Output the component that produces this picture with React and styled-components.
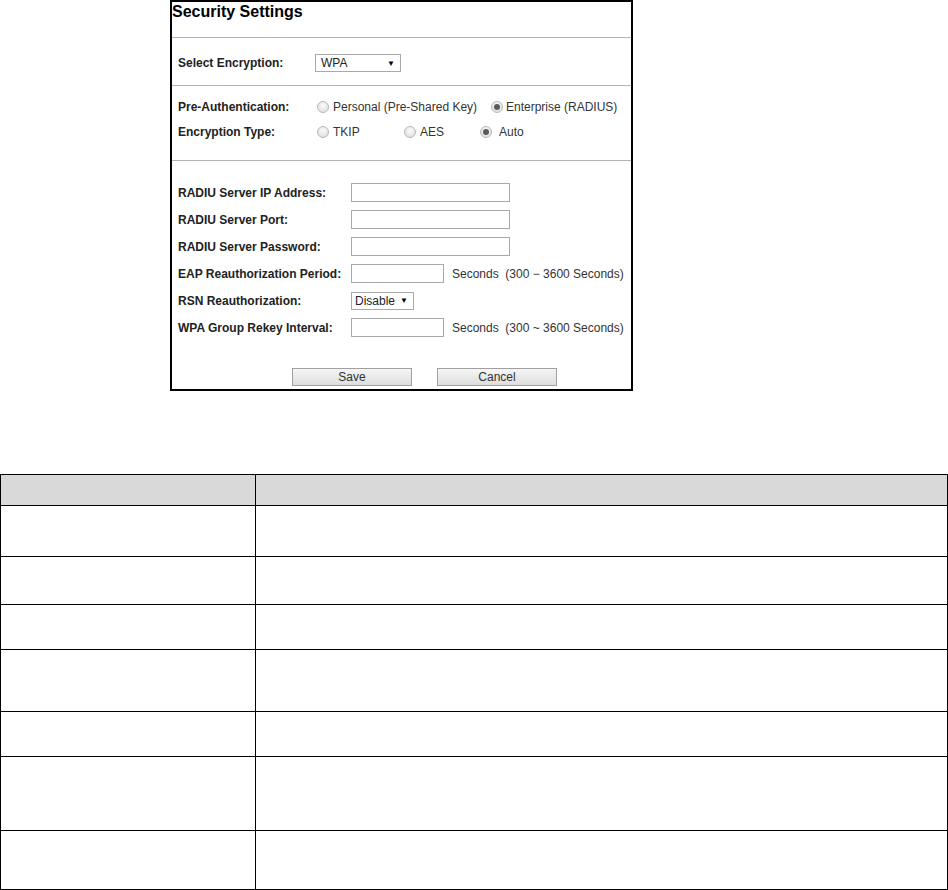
import React from "react";
import styled, { createGlobalStyle } from "styled-components";

const GlobalStyle = createGlobalStyle`
  body {
    margin: 0;
    background: #fff;
    font-family: "Liberation Sans", Arial, sans-serif;
  }
`;

const Page = styled.div`
  width: 948px;
`;

const Panel = styled.div`
  box-sizing: border-box;
  margin-left: 170px;
  width: 463px;
  height: 391px;
  border: 2px solid #000;
  display: flex;
  flex-direction: column;
`;

const Title = styled.h1`
  margin: 0;
  height: 35px;
  font-size: 16px;
  line-height: 20px;
  font-weight: bold;
  color: #000;
`;

const Divider = styled.div`
  height: 1px;
  background: #b4b4b4;
`;

const Section = styled.div`
  display: flex;
  flex-direction: column;
  gap: ${(p) => p.gap || 0}px;
  padding: ${(p) => p.pad};
`;

const Row = styled.div`
  display: flex;
  align-items: center;
  height: ${(p) => p.h || 18}px;
  padding-left: 6px;
`;

const Label = styled.div`
  width: ${(p) => p.w}px;
  flex: none;
  font-size: 12px;
  font-weight: bold;
  color: #222;
`;

const SelectBox = styled.div`
  box-sizing: border-box;
  width: ${(p) => p.w}px;
  height: 18px;
  border: 1px solid #a9a9a9;
  background: #fff;
  display: flex;
  align-items: center;
  justify-content: space-between;
  padding: 0 5px 0 ${(p) => p.pl || 5}px;
  font-size: 12px;
  color: #222;
`;

const Arrow = styled.span`
  font-size: 8px;
  color: #000;
`;

const RadioOption = styled.label`
  display: flex;
  align-items: center;
  gap: ${(p) => p.gap || 4}px;
  width: ${(p) => (p.w ? `${p.w}px` : "auto")};
  font-size: 12px;
  color: #333;
`;

const RadioDot = styled.span`
  box-sizing: border-box;
  width: 12px;
  height: 12px;
  border-radius: 50%;
  border: 1px solid #b8b8b8;
  background: radial-gradient(circle at 50% 35%, #fafafa 0%, #e4e4e4 70%, #d4d4d4 100%);
  display: flex;
  align-items: center;
  justify-content: center;
  flex: none;
  &::after {
    content: "";
    width: 6px;
    height: 6px;
    border-radius: 50%;
    background: ${(p) => (p.checked ? "#5a5a5a" : "transparent")};
  }
`;

const TextInput = styled.div`
  box-sizing: border-box;
  width: ${(p) => p.w}px;
  height: 19px;
  border: 1px solid #a9a9a9;
  background: #fff;
  flex: none;
`;

const Hint = styled.span`
  margin-left: 8px;
  font-size: 12px;
  color: #333;
  white-space: pre;
`;

const Buttons = styled.div`
  display: flex;
  gap: 25px;
  margin-top: 31px;
  padding-left: 120px;
`;

const Button = styled.div`
  box-sizing: border-box;
  width: 120px;
  height: 18px;
  border: 1px solid #a0a0a0;
  background: linear-gradient(#f6f6f6, #dedede);
  display: flex;
  align-items: center;
  justify-content: center;
  font-size: 12px;
  color: #333;
`;

const Table = styled.table`
  margin-top: 83px;
  width: 948px;
  border-collapse: collapse;
  table-layout: fixed;
`;

const Tr = styled.tr`
  height: ${(p) => p.h}px;
  background: ${(p) => (p.head ? "#d9d9d9" : "#fff")};
`;

const Td = styled.td`
  border: 1px solid #000;
  padding: 0;
  width: ${(p) => (p.w ? `${p.w}px` : "auto")};
`;

const fields = [
  { label: "RADIU Server IP Address:", w: 159 },
  { label: "RADIU Server Port:", w: 159 },
  { label: "RADIU Server Password:", w: 159 },
  { label: "EAP Reauthorization Period:", w: 93, hint: "Seconds  (300 \u2212 3600 Seconds)" },
  { label: "RSN Reauthorization:", select: "Disable" },
  { label: "WPA Group Rekey Interval:", w: 93, hint: "Seconds  (300 ~ 3600 Seconds)" },
];

const rowHeights = [51, 48, 45, 62, 45, 74, 59];

export default function App() {
  return (
    <Page>
      <GlobalStyle />
      <Panel>
        <Title>Security Settings</Title>
        <Divider />
        <Section pad="16px 0 13px">
          <Row>
            <Label w={137}>Select Encryption:</Label>
            <SelectBox w={86}>
              WPA <Arrow>▼</Arrow>
            </SelectBox>
          </Row>
        </Section>
        <Divider />
        <Section pad="12px 0 19px" gap={7}>
          <Row>
            <Label w={139}>Pre-Authentication:</Label>
            <RadioOption w={174}>
              <RadioDot />
              Personal (Pre-Shared Key)
            </RadioOption>
            <RadioOption gap={3}>
              <RadioDot checked />
              Enterprise (RADIUS)
            </RadioOption>
          </Row>
          <Row>
            <Label w={139}>Encryption Type:</Label>
            <RadioOption w={87}>
              <RadioDot />
              TKIP
            </RadioOption>
            <RadioOption w={76}>
              <RadioDot />
              AES
            </RadioOption>
            <RadioOption gap={7}>
              <RadioDot checked />
              Auto
            </RadioOption>
          </Row>
        </Section>
        <Divider />
        <Section pad="22px 0 0" gap={8}>
          {fields.map((f) => (
            <Row key={f.label} h={19}>
              <Label w={173}>{f.label}</Label>
              {f.select ? (
                <SelectBox w={63} pl={3}>
                  {f.select} <Arrow>▼</Arrow>
                </SelectBox>
              ) : (
                <TextInput w={f.w} />
              )}
              {f.hint && <Hint>{f.hint}</Hint>}
            </Row>
          ))}
        </Section>
        <Buttons>
          <Button>Save</Button>
          <Button>Cancel</Button>
        </Buttons>
      </Panel>

      <Table>
        <tbody>
          <Tr head h={31}>
            <Td w={254} />
            <Td />
          </Tr>
          {rowHeights.map((h, i) => (
            <Tr key={i} h={h}>
              <Td w={254} />
              <Td />
            </Tr>
          ))}
        </tbody>
      </Table>
    </Page>
  );
}
